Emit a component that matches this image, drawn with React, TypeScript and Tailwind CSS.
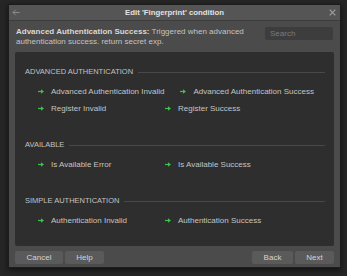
import React from "react";

type Section = { title: string; rows: string[][] };

const sections: Section[] = [
  {
    title: "ADVANCED AUTHENTICATION",
    rows: [
      ["Advanced Authentication Invalid", "Advanced Authentication Success"],
      ["Register Invalid", "Register Success"],
    ],
  },
  { title: "AVAILABLE", rows: [["Is Available Error", "Is Available Success"]] },
  {
    title: "SIMPLE AUTHENTICATION",
    rows: [["Authentication Invalid", "Authentication Success"]],
  },
];

const Arrow = () => (
  <svg width="6" height="5" viewBox="0 0 6 5" className="shrink-0">
    <path d="M0 2.5h3.6" stroke="#3cc24a" strokeWidth="1.2" />
    <path d="M3 0.3L6 2.5L3 4.7z" fill="#3cc24a" />
  </svg>
);

const Btn = ({ label, w }: { label: string; w: string }) => (
  <button
    className={`${w} h-[13px] rounded-[2px] bg-[#5a5a5a] text-[8px] text-[#d4d4d4] leading-none`}
  >
    {label}
  </button>
);

export default function App() {
  return (
    <div
      className="w-[347px] h-[276px] bg-[#262626] pt-[4px] pl-[8px]"
      style={{ fontFamily: '"Liberation Sans", Arial, sans-serif' }}
    >
      <div className="w-[333px] h-[264px] bg-[#4b4b4b] border border-[#1c1c1c] shadow-[0_2px_6px_rgba(0,0,0,0.6)] flex flex-col">
        {/* title bar */}
        <div className="h-[16px] bg-[#555555] border-b border-[#3c3c3c] flex items-center justify-between pl-[3px] pr-[4px]">
          <svg width="8" height="7" viewBox="0 0 8 7">
            <path d="M7.5 3.5H1M3.7 0.8L1 3.5l2.7 2.7" stroke="#8c8c8c" strokeWidth="1" fill="none" />
          </svg>
          <span className="text-[7.8px] text-[#e2e2e2] font-bold">Edit 'Fingerprint' condition</span>
          <svg width="7" height="7" viewBox="0 0 7 7">
            <path d="M0.7 0.7l5.6 5.6M6.3 0.7L0.7 6.3" stroke="#a0a0a0" strokeWidth="1.1" />
          </svg>
        </div>

        {/* description + search */}
        <div className="flex justify-between pl-[7px] pr-[7px] pt-[6px] h-[31px]">
          <p className="text-[8px] leading-[10px] text-[#c4c4c4] w-[240px]">
            <b className="text-[#d8d8d8]">Advanced Authentication Success:</b> Triggered when advanced
            authentication success. return secret exp.
          </p>
          <div className="w-[68px] h-[13px] bg-[#3d3d3d] rounded-[2px] px-[5px] text-[8px] leading-[13px] text-[#7a7a7a]">
            Search
          </div>
        </div>

        {/* panel */}
        <div className="mx-[6px] h-[194px] bg-[#2e2e2e] rounded-[2px] pl-[10px] pr-[9px] pt-[15px]">
          {sections.map((s) => (
            <div key={s.title} className="mb-[23px]">
              <div className="flex items-center gap-[5px] h-[10px]">
                <span className="text-[7.5px] text-[#c2c2c2] whitespace-nowrap">{s.title}</span>
                <div className="flex-1 h-px bg-[#484848]" />
              </div>
              <div className="pl-[13px] pt-[6px]">
                {s.rows.map((row, i) => (
                  <div key={i} className="flex gap-x-[16px] h-[17px]">
                    {row.map((it) => (
                      <div key={it} className="flex items-center gap-[7px] min-w-[111px]">
                        <Arrow />
                        <span className="text-[8px] text-[#c4c4c4] whitespace-nowrap">{it}</span>
                      </div>
                    ))}
                  </div>
                ))}
              </div>
            </div>
          ))}
        </div>

        {/* footer */}
        <div className="flex justify-between px-[6px] pt-[5px]">
          <div className="flex gap-[2px]">
            <Btn label="Cancel" w="w-[48px]" />
            <Btn label="Help" w="w-[39px]" />
          </div>
          <div className="flex gap-[2px]">
            <Btn label="Back" w="w-[41px]" />
            <Btn label="Next" w="w-[39px]" />
          </div>
        </div>
      </div>
    </div>
  );
}
